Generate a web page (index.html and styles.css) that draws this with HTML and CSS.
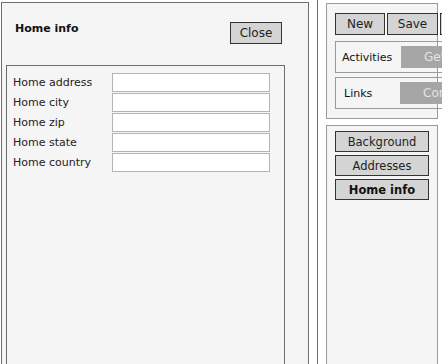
FILE: index.html
```html
<!DOCTYPE html>
<html lang="en">
<head>
  <meta charset="UTF-8" />
  <title>Home info</title>
  <link rel="stylesheet" href="styles.css">
</head>
<body>
  <div class="detail-panel">
    <div class="detail-head">
      <h2>Home info</h2>
      <button class="btn">Close</button>
    </div>
    <div class="fields">
      <div class="field"><label>Home address</label><input type="text"></div>
      <div class="field"><label>Home city</label><input type="text"></div>
      <div class="field"><label>Home zip</label><input type="text"></div>
      <div class="field"><label>Home state</label><input type="text"></div>
      <div class="field"><label>Home country</label><input type="text"></div>
    </div>
  </div>
  <div class="side-panel">
    <div class="side-box top-box">
      <div class="tool-row">
        <button class="btn tool">New</button>
        <button class="btn tool save">Save</button>
        <button class="btn tool">Delete</button>
      </div>
      <div class="link-box">
        <span class="link-label">Activities</span>
        <button class="btn muted">Get activities</button>
      </div>
      <div class="link-box">
        <span class="link-label links">Links</span>
        <button class="btn muted">Connections</button>
      </div>
    </div>
    <div class="side-box nav-box">
      <button class="btn nav">Background</button>
      <button class="btn nav">Addresses</button>
      <button class="btn nav active">Home info</button>
    </div>
  </div>
</body>
</html>
```
FILE: styles.css
```css
* { box-sizing: border-box; }
html, body { height: 100%; overflow: hidden; }
body {
  margin: 0; padding: 0 0 0 1px;
  background: #ffffff; color: #000;
  font-family: 'DejaVu Sans', Verdana, sans-serif; font-size: 11px;
  display: flex; align-items: flex-start;
}
.btn {
  font-family: 'DejaVu Sans', Verdana, sans-serif; font-size: 12px;
  background: #d4d4d4; color: #222;
  border: 1px solid #333; border-radius: 0;
  padding: 0; height: 22px; margin: 0;
}
.detail-panel {
  flex-shrink: 0;
  margin-top: 2px; width: 308px; height: 420px;
  background: #f5f5f5; border: 1px solid #6e6e6e;
  padding: 18px 23px 0 4px;
}
.detail-head {
  display: flex; justify-content: space-between; align-items: flex-start;
  height: 44px; padding-left: 9px;
}
.detail-head h2 { margin: 1px 0 0; font-size: 11px; font-weight: bold; color: #111; }
.detail-head .btn { width: 52px; margin-top: 1px; margin-right: 3px; }
.fields {
  height: 340px; border: 1px solid #6e6e6e;
  padding: 6px 0 0 6px;
}
.field { display: flex; align-items: center; height: 20px; }
.field label { width: 99px; color: #222; }
.field input {
  width: 158px; height: 19px; margin: 0;
  border: 1px solid #b4b4b4; background: #fff; padding: 0;
}
.side-panel {
  flex-shrink: 0;
  margin-left: 8px; width: 140px; height: 420px;
  border-left: 1px solid #6e6e6e;
  padding: 3px 0 0 8px;
}
.side-box { background: #f5f5f5; border: 1px solid #9a9a9a; width: 112px; }
.top-box { height: 116px; padding: 9px 0 0 8px; }
.tool-row { display: flex; gap: 2px; width: 200px; }
.tool { width: 50px; flex-shrink: 0; }
.tool.save { width: 51px; }
.link-box {
  display: flex; align-items: center;
  width: 200px; height: 32px; margin-top: 6px;
  border: 1px solid #9a9a9a; padding-left: 6px;
}
.top-box .link-box + .link-box { margin-top: 4px; }
.link-label { width: 59px; flex-shrink: 0; color: #111; }
.link-label.links { padding-left: 2px; width: 58px; }
.muted {
  background: #a6a6a6; color: #e4e4e4; border-color: #a6a6a6;
  width: 120px; flex-shrink: 0; text-align: left; padding-left: 22px;
}
.nav-box {
  margin-top: 6px; height: 300px;
  padding: 5px 0 0 8px;
  display: flex; flex-direction: column; gap: 3px;
}
.nav { width: 94px; height: 21px; font-size: 11.5px; }
.nav.active { font-weight: bold; color: #111; }
```
